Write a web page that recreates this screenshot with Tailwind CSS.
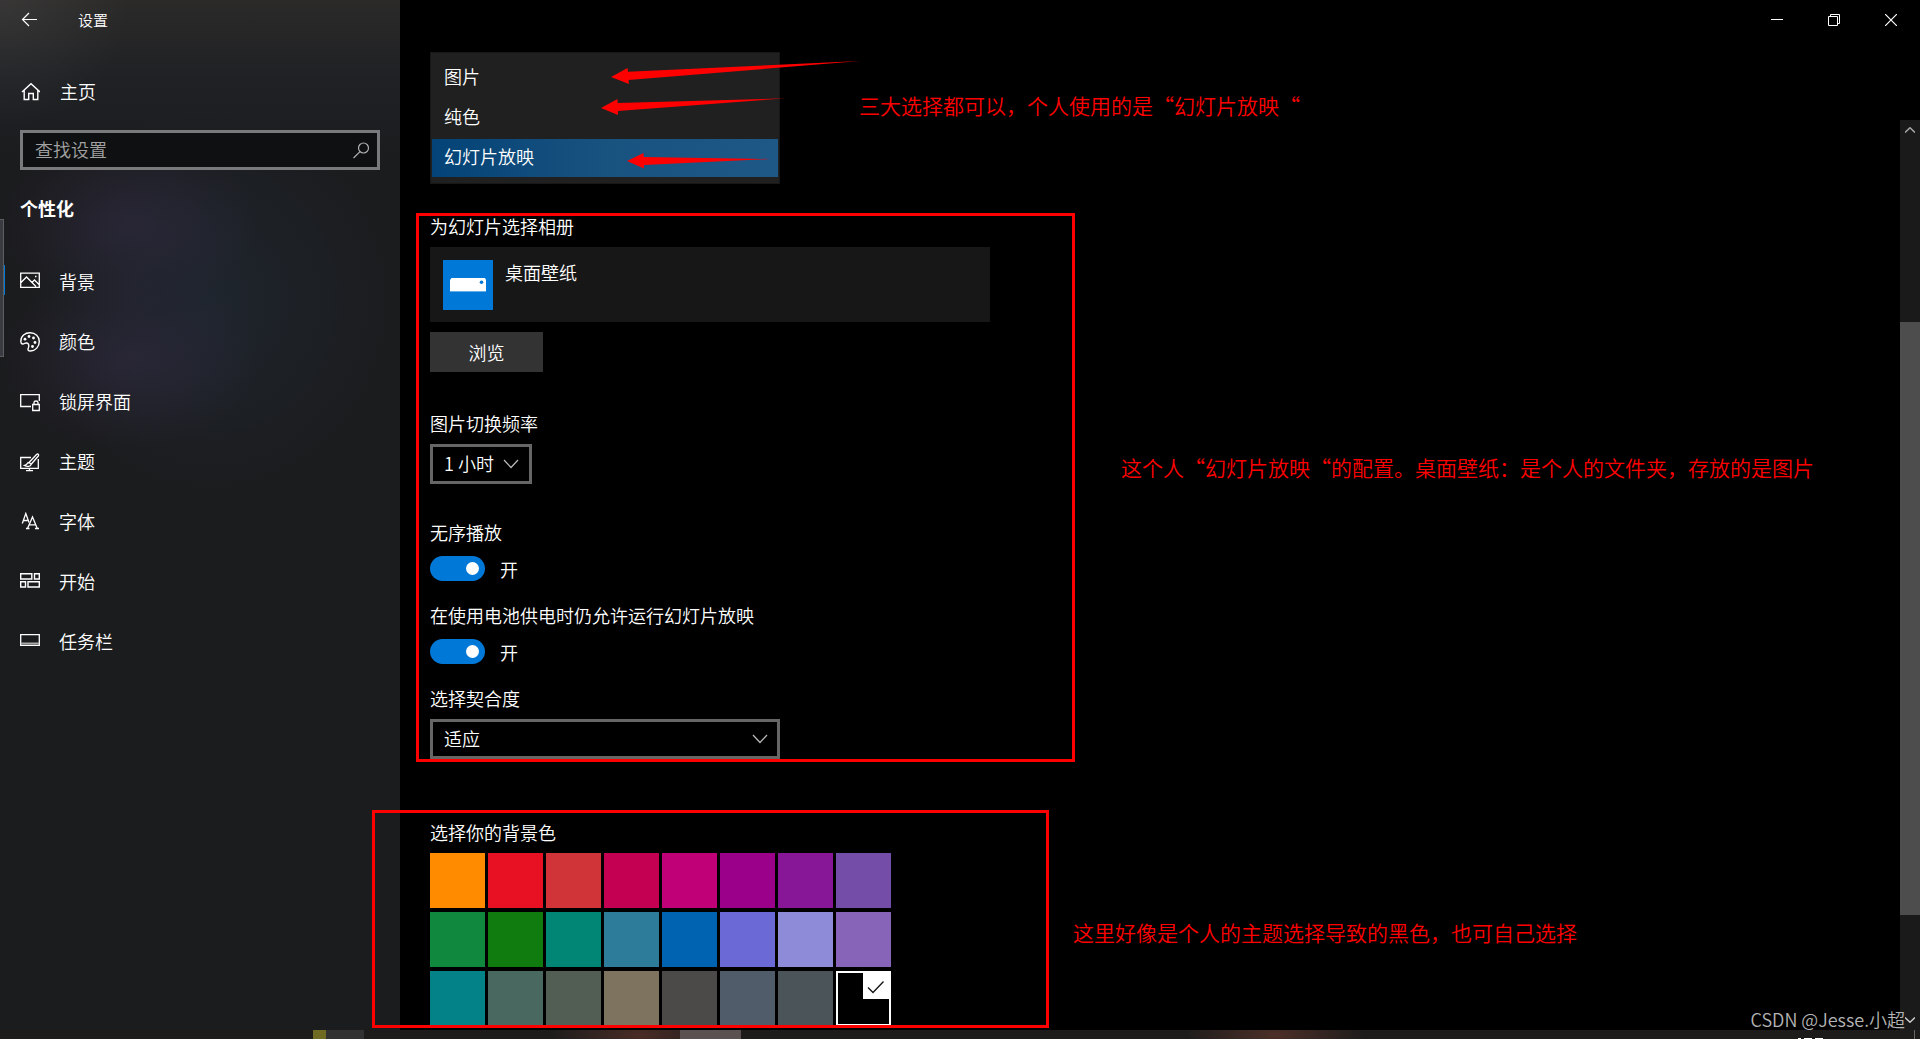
<!DOCTYPE html>
<html lang="zh-CN">
<head>
<meta charset="utf-8">
<title>设置</title>
<script src="https://cdn.jsdelivr.net/npm/@tailwindcss/browser@4"></script>
</head>
<body class="relative flex h-screen flex-col overflow-hidden bg-black font-['Noto_Sans_CJK_SC',sans-serif] text-[18px] leading-6 font-[350] text-white">
<div class="flex min-h-0 flex-1">

  <!-- Sidebar -->
  <aside class="relative w-[400px] shrink-0 bg-[#1b1c1e] bg-[radial-gradient(circle_at_0px_0px,#ffffff10,transparent_130px),radial-gradient(ellipse_130px_90px_at_130px_225px,#3a305066,transparent),radial-gradient(ellipse_130px_90px_at_130px_360px,#3a305066,transparent),radial-gradient(ellipse_180px_190px_at_210px_300px,#23334466,transparent),linear-gradient(#2b2a29,#1f2124_80px,#1b1c1e_160px)]">
    <div class="absolute top-[219px] left-0 h-[138px] w-1 border border-l-0 border-[#5c5d60] bg-[#3a3b40]"></div>
    <header class="flex h-10 items-center gap-[38px] pl-5">
      <button aria-label="返回" class="size-5">
        <svg class="size-5" viewBox="0 0 20 20" fill="none" stroke="#fff" stroke-width="1.2"><path d="M17 9.5H2.5M9 3 2.5 9.5 9 16"/></svg>
      </button>
      <h1 class="text-[15px]">设置</h1>
    </header>
    <a href="#" class="mt-8 flex h-10 items-center gap-5 pl-5">
      <svg class="size-5" viewBox="0 0 20 20" fill="none" stroke="#fff" stroke-width="1.4"><path d="M2 10 11 1.7 20 10M4.2 8.500V17.500H8.700V11.500H13.300V17.500H17.800V8.500"/></svg>
      <span class="pb-0.5">主页</span>
    </a>
    <div class="relative mx-5 mt-[18px]">
      <input type="text" aria-label="查找设置" placeholder="查找设置" class="block h-10 w-full rounded-none border-3 border-[#787a7b] bg-[#0f1011] pr-10 pb-0.5 pl-3 placeholder:text-[#a2a2a2]">
      <svg class="absolute top-[11px] right-[10px] size-[18px]" viewBox="0 0 18 18" fill="none" stroke="#b0b0b0" stroke-width="1.2"><circle cx="11.500" cy="7" r="5"/><path d="M8 10.600 1.500 17"/></svg>
    </div>
    <h2 class="mt-[26px] pl-5 font-bold">个性化</h2>
    <nav class="mt-8 flex flex-col">
      <a href="#" class="relative flex h-[60px] items-center gap-[19px] pl-5">
        <span class="absolute top-[13px] left-1 h-[30px] w-px bg-[#0078d7]"></span>
        <svg class="size-5" viewBox="0 0 20 20" fill="none" stroke="#fff" stroke-width="1.3"><path d="M.7 1.200H19.300V15.300H.7zM1 10.500 6.500 5 16 14.500M12 10.500 14.500 8 19 12.500"/><path d="M15 4.500h1.500"/></svg>
        <span class="pb-0.5">背景</span>
      </a>
      <a href="#" class="flex h-[60px] items-center gap-[19px] pl-5">
        <svg class="size-5" viewBox="0 0 20 20" fill="none" stroke="#fff" stroke-width="1.4"><path d="M.8 9.500C.8 4 5 .8 10.200.8S19.300 4.500 19.300 9.500 15.500 19 10.500 19C8 19 7.500 17.500 8.300 16 9.300 14 9 11.500 6.800 11 4.500 10.500 4.500 12.300 2.600 12 1.200 11.700.8 10.800.8 9.500z"/><g fill="#fff" stroke="none"><circle cx="5" cy="7.200" r="1.400"/><circle cx="9" cy="4.500" r="1.400"/><circle cx="13.500" cy="6" r="1.400"/><circle cx="15" cy="10.500" r="1.400"/><circle cx="12.500" cy="14.500" r="1.400"/></g></svg>
        <span class="pb-0.5">颜色</span>
      </a>
      <a href="#" class="flex h-[60px] items-center gap-[19px] pl-5">
        <svg class="size-5" viewBox="0 0 20 20" fill="none" stroke="#fff" stroke-width="1.3"><path d="M11 14.500H.7V2.700H19.300V9M12.700 12.500H19.300V18.500H12.700zM14 12.500V10.500C14 8.500 18 8.500 18 10.500V12.500"/></svg>
        <span class="pb-0.5">锁屏界面</span>
      </a>
      <a href="#" class="flex h-[60px] items-center gap-[19px] pl-5">
        <svg class="size-5" viewBox="0 0 20 20" fill="none" stroke="#fff" stroke-width="1.3"><path d="M11 5.500H.7V16.300H18.300V7M9.500 16.300V18.500M6 18.700H13"/><path d="M9 10.500 16.500 2.500C18 1.300 19.300 2.600 18.300 4L11.200 12.200M9 10.500C7 10.500 7.500 13 4.500 13.500 7 15 11 14.500 11.200 12.200z"/></svg>
        <span class="pb-0.5">主题</span>
      </a>
      <a href="#" class="flex h-[60px] items-center gap-[19px] pl-5">
        <svg class="size-5" viewBox="0 0 20 20" fill="none" stroke="#fff" stroke-width="1.3"><path d="M2.300 11.500 5.800 1.500 9 10.500M3.500 8.500H7.500"/><path d="M7.500 16.500 12.500 5 17.300 16.500M9.300 12.800H15.600M6 16.500H9.500M15 16.500H19"/></svg>
        <span class="pb-0.5">字体</span>
      </a>
      <a href="#" class="flex h-[60px] items-center gap-[19px] pl-5">
        <svg class="size-5" viewBox="0 0 20 20" fill="none" stroke="#fff" stroke-width="1.4"><path d="M.7 1.700H11.800V7H.7zM14.500 1.700H19.300V7H14.500zM.7 9.800H5.500V15H.7zM8 9.800H19.300V15H8z"/></svg>
        <span class="pb-0.5">开始</span>
      </a>
      <a href="#" class="flex h-[60px] items-center gap-[19px] pl-5">
        <svg class="size-5" viewBox="0 0 20 20" fill="none" stroke="#fff" stroke-width="1.3"><path d="M.7 2.700H19.300V13.300H.7z"/><path d="M1 11.500H19" stroke="#aaa" stroke-width="2"/></svg>
        <span class="pb-0.5">任务栏</span>
      </a>
    </nav>
  </aside>

  <!-- Settings page -->
  <main class="flex min-w-0 flex-1 flex-col">
    <header class="flex h-10 shrink-0 justify-end pr-px">
      <button aria-label="最小化" class="flex w-[57px] items-center justify-center"><svg class="size-3" viewBox="0 0 12 12" stroke="#fff"><path d="M0 5.500H12"/></svg></button>
      <button aria-label="还原" class="flex w-[57px] items-center justify-center"><svg class="size-3" viewBox="0 0 12 12" fill="none" stroke="#fff"><path d="M.5 2.500H9.500V11.500H.5zM2.500 2.500V.5H11.500V9.500H9.500"/></svg></button>
      <button aria-label="关闭" class="flex w-[57px] items-center justify-center"><svg class="size-3" viewBox="0 0 12 12" stroke="#fff" stroke-width="1.200"><path d="M0 0 12 12M12 0 0 12"/></svg></button>
    </header>

    <div class="flex min-h-0 flex-1">
      <div class="flex min-w-0 flex-1 flex-col items-start overflow-hidden pt-3 pl-[30px]">
        <ul class="flex h-[132px] w-[350px] shrink-0 flex-col border border-[#171717] bg-[#202020] px-px pt-1">
          <li><button class="block h-10 w-full px-3 pb-0.5 text-left">图片</button></li>
          <li><button class="block h-10 w-full px-3 pb-0.5 text-left">纯色</button></li>
          <li class="pt-[2px]"><button class="block h-[38px] w-full bg-linear-to-r from-[#034377] via-[#18527f] to-[#1e5887] px-3 pb-1 text-left">幻灯片放映</button></li>
        </ul>

        <h3 class="mt-[30px]">为幻灯片选择相册</h3>
        <div class="mt-[9px] flex h-[75px] w-[560px] shrink-0 items-start gap-3 bg-[#171717] px-[13px] pt-[13px]">
          <svg class="size-[50px] bg-[#0078d7]" viewBox="0 0 50 50"><path fill="#fff" d="M8.500 18H42L43 20V31H7V20z"/><path fill="#66aee7" d="M7 31H43V32H7z"/><circle cx="38.500" cy="22.300" r="1.800" fill="#0078d7"/></svg>
          <span>桌面壁纸</span>
        </div>
        <button class="mt-[10px] h-10 w-[113px] shrink-0 bg-[#333]">浏览</button>

        <label for="freq" class="mt-[39px]">图片切换频率</label>
        <div class="relative mt-[9px]">
          <select id="freq" class="block h-10 w-[102px] appearance-none rounded-none border-3 border-[#666] bg-black pb-0.5 pl-[11px]"><option>1 小时</option></select>
          <svg class="pointer-events-none absolute top-[15px] right-[13px] h-[10px] w-4" viewBox="0 0 16 10" fill="none" stroke="#bbb" stroke-width="1.200"><path d="M1 1 8 8.500 15 1"/></svg>
        </div>

        <label for="shuffle" class="mt-9">无序播放</label>
        <div class="mt-3 flex items-center gap-[15px]">
          <input id="shuffle" type="checkbox" checked class="relative h-[25px] w-[55px] appearance-none rounded-full bg-[#0078d7] before:absolute before:top-[6px] before:right-[6px] before:size-[13px] before:rounded-full before:bg-white">
          <span>开</span>
        </div>

        <label for="battery" class="mt-[22px]">在使用电池供电时仍允许运行幻灯片放映</label>
        <div class="mt-3 flex items-center gap-[15px]">
          <input id="battery" type="checkbox" checked class="relative h-[25px] w-[55px] appearance-none rounded-full bg-[#0078d7] before:absolute before:top-[6px] before:right-[6px] before:size-[13px] before:rounded-full before:bg-white">
          <span>开</span>
        </div>

        <label for="fit" class="mt-[22px]">选择契合度</label>
        <div class="relative mt-[9px]">
          <select id="fit" class="block h-10 w-[350px] appearance-none rounded-none border-3 border-[#666] bg-black pb-0.5 pl-[11px]"><option>适应</option></select>
          <svg class="pointer-events-none absolute top-[15px] right-[12px] h-[10px] w-4" viewBox="0 0 16 10" fill="none" stroke="#bbb" stroke-width="1.200"><path d="M1 1 8 8.500 15 1"/></svg>
        </div>

        <h3 class="mt-[61px]">选择你的背景色</h3>
        <div class="mt-[9px] grid shrink-0 grid-cols-[repeat(8,55px)] gap-x-[3px] gap-y-1">
          <button aria-label="橙色" class="h-[55px] bg-[#ff8c00]"></button>
          <button aria-label="红色" class="h-[55px] bg-[#e81123]"></button>
          <button aria-label="浅红" class="h-[55px] bg-[#d13438]"></button>
          <button aria-label="玫红" class="h-[55px] bg-[#c30052]"></button>
          <button aria-label="品红" class="h-[55px] bg-[#bf0077]"></button>
          <button aria-label="紫红" class="h-[55px] bg-[#9a0089]"></button>
          <button aria-label="深紫" class="h-[55px] bg-[#881798]"></button>
          <button aria-label="紫色" class="h-[55px] bg-[#744da9]"></button>
          <button aria-label="绿色" class="h-[55px] bg-[#10893e]"></button>
          <button aria-label="深绿" class="h-[55px] bg-[#107c10]"></button>
          <button aria-label="青绿" class="h-[55px] bg-[#018574]"></button>
          <button aria-label="灰蓝" class="h-[55px] bg-[#2d7d9a]"></button>
          <button aria-label="蓝色" class="h-[55px] bg-[#0063b1]"></button>
          <button aria-label="蓝紫" class="h-[55px] bg-[#6b69d6]"></button>
          <button aria-label="淡紫" class="h-[55px] bg-[#8e8cd8]"></button>
          <button aria-label="鸢尾紫" class="h-[55px] bg-[#8764b8]"></button>
          <button aria-label="青色" class="h-[55px] bg-[#038387]"></button>
          <button aria-label="苔绿" class="h-[55px] bg-[#486860]"></button>
          <button aria-label="橄榄绿" class="h-[55px] bg-[#525e54]"></button>
          <button aria-label="卡其" class="h-[55px] bg-[#7e735f]"></button>
          <button aria-label="深灰" class="h-[55px] bg-[#4c4a48]"></button>
          <button aria-label="石板蓝" class="h-[55px] bg-[#515c6b]"></button>
          <button aria-label="石板灰" class="h-[55px] bg-[#4a5459]"></button>
          <button aria-label="黑色" class="flex h-[55px] items-start justify-end border-2 border-white bg-black"><svg class="size-[26px] bg-white" viewBox="0 0 26 26" fill="none" stroke="#111" stroke-width="1.300"><path d="M5 14.500 10 19.500 20.500 8.500"/></svg></button>
        </div>
      </div>

      <!-- Scrollbar -->
      <div class="mt-20 flex w-5 shrink-0 flex-col bg-[#1a1a1a]">
        <button aria-label="向上滚动" class="flex h-5 shrink-0 items-center justify-center"><svg class="h-[6px] w-[10px]" viewBox="0 0 10 6" fill="none" stroke="#aaa" stroke-width="1.500"><path d="M0 5.500 5 .8 10 5.500"/></svg></button>
        <div class="flex-182"></div>
        <div class="flex-593 bg-[#4d4d4d]"></div>
        <div class="flex-95"></div>
        <button aria-label="向下滚动" class="flex h-5 shrink-0 items-center justify-center"><svg class="h-[6px] w-[10px]" viewBox="0 0 10 6" fill="none" stroke="#ccc" stroke-width="1.500"><path d="M0 .5 5 5.200 10 .5"/></svg></button>
      </div>
    </div>
  </main>
</div>

<!-- Top edge of the taskbar -->
<footer class="flex h-[9px] shrink-0 items-stretch bg-[#1d1c1b] bg-[radial-gradient(ellipse_90px_30px_at_640px_5px,#4a2c26,transparent),radial-gradient(ellipse_90px_30px_at_1275px_5px,#4d2f28,transparent)]">
  <span class="ml-[313px] w-[13px] bg-[#6f6b22]"></span>
  <span class="w-[38px] bg-[#323232]"></span>
  <span class="ml-[316px] w-[61px] bg-[#5b5150]"></span>
  <span class="ml-auto flex items-end gap-[3px] pr-[91px]">
    <i class="h-px w-[3px] bg-white"></i><i class="h-px w-2 bg-white"></i><i class="h-px w-2 bg-white"></i>
  </span>
  <span class="mr-[5px] w-px bg-[#666]"></span>
</footer>

<!-- Annotations drawn over the window -->
<svg class="pointer-events-none absolute top-0 left-0 h-[200px] w-[900px]" viewBox="0 0 900 200" fill="#f00">
  <path d="M611 77 627.500 68 628 71.800 860 61 628.500 80 629 84z"/>
  <path d="M601 108 617.500 99 617.700 103 786 98.300 618 111 618 115z"/>
  <path d="M627 161 643.500 153 643.700 157 770 159 644 165 644 168.500z"/>
</svg>
<div class="pointer-events-none absolute top-[213px] left-[416px] h-[549px] w-[659px] border-3 border-[#f00]"></div>
<div class="pointer-events-none absolute top-[810px] left-[372px] h-[218px] w-[677px] border-3 border-[#f00]"></div>
<p class="absolute top-[93px] left-[859px] text-[21px] whitespace-nowrap text-[#f00]">三大选择都可以，个人使用的是“幻灯片放映“</p>
<p class="absolute top-[455px] left-[1121px] text-[21px] whitespace-nowrap text-[#f00]">这个人“幻灯片放映“的配置。桌面壁纸：是个人的文件夹，存放的是图片</p>
<p class="absolute top-[920px] left-[1073px] text-[21px] whitespace-nowrap text-[#f00]">这里好像是个人的主题选择导致的黑色，也可自己选择</p>
<p class="absolute right-[15px] bottom-2 whitespace-nowrap text-[#b4b4b4]">CSDN @Jesse.小超</p>
</body>
</html>
